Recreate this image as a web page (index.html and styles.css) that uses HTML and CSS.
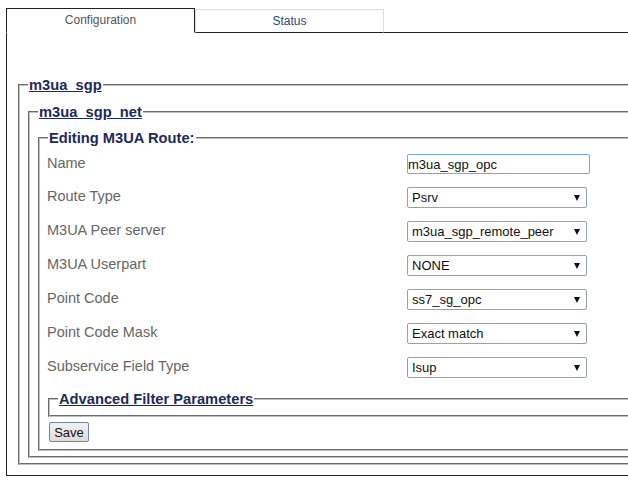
FILE: index.html
```html
<!DOCTYPE html>
<html>
<head>
<meta charset="utf-8">
<link rel="stylesheet" href="styles.css">
</head>
<body>
<div class="tabs">
  <div class="tab tab-active">Configuration</div>
  <div class="tab tab-idle">Status</div>
  <div class="tab-fill"></div>
</div>
<div class="panel">
  <fieldset class="fs fs-1">
    <legend class="lg"><a class="lg-link" href="#">m3ua_sgp</a></legend>
    <fieldset class="fs fs-2">
      <legend class="lg"><a class="lg-link" href="#">m3ua_sgp_net</a></legend>
      <fieldset class="fs fs-3">
        <legend class="lg">Editing M3UA Route:</legend>
        <div class="form">
          <label class="lbl lbl-first">Name</label>
          <input class="txt" type="text" value="m3ua_sgp_opc">
          <label class="lbl">Route Type</label>
          <span class="sel"><span class="sel-val">Psrv</span></span>
          <label class="lbl">M3UA Peer server</label>
          <span class="sel"><span class="sel-val">m3ua_sgp_remote_peer</span></span>
          <label class="lbl">M3UA Userpart</label>
          <span class="sel"><span class="sel-val">NONE</span></span>
          <label class="lbl">Point Code</label>
          <span class="sel"><span class="sel-val">ss7_sg_opc</span></span>
          <label class="lbl">Point Code Mask</label>
          <span class="sel"><span class="sel-val">Exact match</span></span>
          <label class="lbl">Subservice Field Type</label>
          <span class="sel"><span class="sel-val">Isup</span></span>
        </div>
        <fieldset class="fs fs-adv">
          <legend class="lg"><a class="lg-link" href="#">Advanced Filter Parameters</a></legend>
        </fieldset>
        <button class="btn" type="button">Save</button>
      </fieldset>
    </fieldset>
  </fieldset>
</div>
</body>
</html>
```
FILE: styles.css
```css
html, body {
  margin: 0;
  padding: 0;
  overflow: hidden;
  background: #fff;
  font-family: "Liberation Sans", Arial, sans-serif;
}

.tabs {
  display: flex;
  align-items: flex-end;
  margin: 8px 0 0 6px;
  width: 760px;
}

.tab {
  box-sizing: border-box;
  width: 189px;
  font-size: 12px;
  text-align: center;
}

.tab-active {
  height: 25px;
  border: 1px solid #222;
  border-bottom: 1px solid #fff;
  color: #555;
  padding-top: 4px;
}

.tab-idle {
  height: 24px;
  border: 1px solid #ddd;
  border-bottom: 1px solid #222;
  color: #2b4a7c;
  padding-top: 4px;
}

.tab-fill {
  flex: 1;
  border-bottom: 1px solid #222;
}

.panel {
  box-sizing: border-box;
  width: 760px;
  margin-left: 6px;
  border: 1px solid #222;
  border-top: none;
  padding: 44px 0 10px 11px;
}

.fs {
  margin: 0;
  border: 2px groove #c0c0c0;
  padding: 0 6px 5px 8px;
  min-width: 0;
}

.fs-1 { padding-top: 11px; }
.fs-2 { padding-top: 10px; }
.fs-3 { padding-top: 8px; padding-bottom: 7px; }

.lg {
  padding: 0 1px;
  font-size: 14.7px;
  font-weight: bold;
  color: #1c2a5c;
  line-height: 16px;
}

.lg-link {
  color: #1c2a5c;
  text-decoration: underline;
}

.form {
  display: grid;
  grid-template-columns: 360px auto;
  grid-template-rows: 20px repeat(6, 21px);
  row-gap: 13px;
  align-items: center;
  justify-items: start;
  margin-left: -1px;
}

.lbl {
  font-size: 14.5px;
  line-height: 16px;
  color: #666;
  margin-top: -4px;
}

.lbl-first {
  margin-top: -2px;
}

.txt {
  box-sizing: border-box;
  width: 183px;
  height: 20px;
  margin: 0;
  padding: 0;
  border: 1px solid #78a6de;
  border-radius: 2px;
  font-family: "Liberation Sans", Arial, sans-serif;
  font-size: 13px;
  color: #111;
  outline: none;
}

.sel {
  position: relative;
  box-sizing: border-box;
  display: block;
  width: 180px;
  height: 21px;
  border: 1px solid #8da2bb;
  border-radius: 2px;
  font-size: 13px;
  line-height: 19px;
  color: #111;
  padding-left: 4px;
}

.sel::after {
  content: "";
  position: absolute;
  right: 6px;
  top: 7px;
  border-left: 3.5px solid transparent;
  border-right: 3.5px solid transparent;
  border-top: 6px solid #111;
}

.fs-adv {
  margin-top: 13px;
  padding: 0 6px 8px 8px;
}

.btn {
  display: block;
  box-sizing: border-box;
  width: 40px;
  height: 20px;
  margin: 5px 0 0 1px;
  padding: 0;
  border: 1px solid #6f8aa8;
  border-radius: 2px;
  background: linear-gradient(#f2f2f2, #dcdcdc);
  font-family: "Liberation Sans", Arial, sans-serif;
  font-size: 13px;
  color: #111;
}
```
